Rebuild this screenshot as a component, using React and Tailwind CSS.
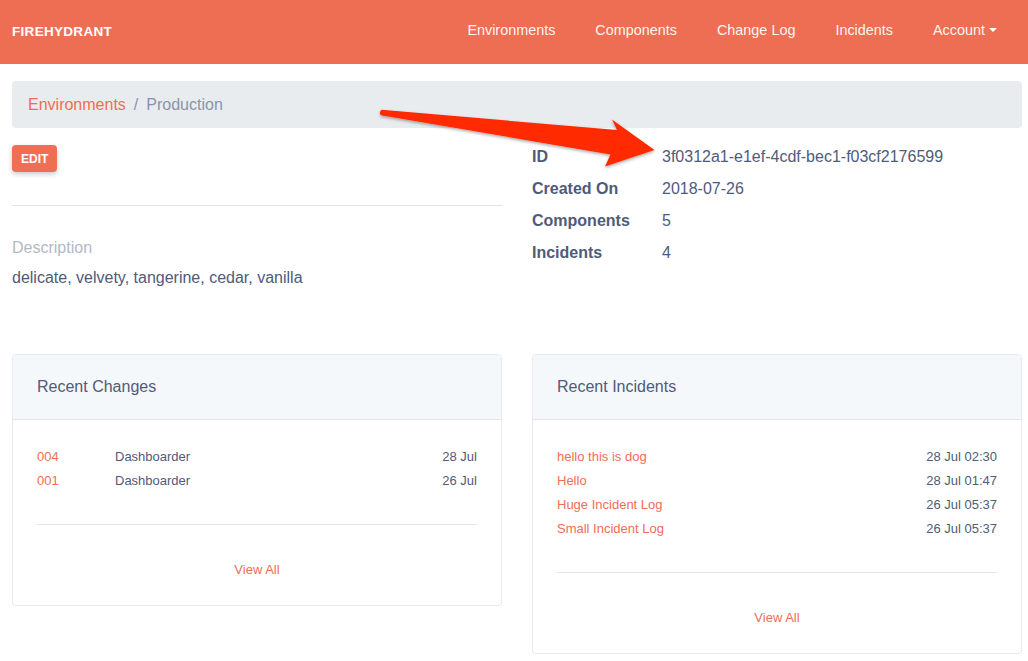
import React from 'react';

const NAV = ['Environments', 'Components', 'Change Log', 'Incidents'];

const CHANGES = [
  { id: '004', name: 'Dashboarder', date: '28 Jul' },
  { id: '001', name: 'Dashboarder', date: '26 Jul' },
];

const INCIDENTS = [
  { name: 'hello this is dog', date: '28 Jul 02:30' },
  { name: 'Hello', date: '28 Jul 01:47' },
  { name: 'Huge Incident Log', date: '26 Jul 05:37' },
  { name: 'Small Incident Log', date: '26 Jul 05:37' },
];

const DETAILS = [
  ['ID', '3f0312a1-e1ef-4cdf-bec1-f03cf2176599'],
  ['Created On', '2018-07-26'],
  ['Components', '5'],
  ['Incidents', '4'],
];

// Card with header, list body, divider and "View All" link
const Card = ({ title, children }) => (
  <div className="border border-[#e7eaef] rounded-[4px] bg-white overflow-hidden">
    <div className="h-[65px] flex items-center px-[24px] bg-[#f5f8fb] border-b border-[#e3e7ec] text-[16px] text-[#4f5b79]">
      {title}
    </div>
    <div className="px-[24px] pt-[25px]">
      {children}
      <div className="mt-[31px] border-t border-[#e2e4e8]" />
      <div className="pt-[33px] pb-[23px] text-center text-[13px] leading-[24px] text-[#ee6e54]">View All</div>
    </div>
  </div>
);

const Arrow = () => (
  <svg className="absolute left-0 top-0 pointer-events-none" width="1028" height="661" viewBox="0 0 1028 661">
    <defs>
      <filter id="sh" x="-10%" y="-50%" width="120%" height="200%">
        <feDropShadow dx="0" dy="1.5" stdDeviation="1.5" floodColor="#000" floodOpacity="0.35" />
      </filter>
    </defs>
    <path
      d="M381.5 109.8 L617 130 L612 119.5 L654.5 150 L605 166.5 L610.5 154.5 L381 115.2 Q378.5 112.5 381.5 109.8 Z"
      fill="#ff2a00"
      filter="url(#sh)"
    />
  </svg>
);

export default function App() {
  return (
    <div className="relative w-[1028px] h-[661px] overflow-hidden bg-white font-['Liberation_Sans',Arial,sans-serif] text-[#4f5b79]">
      {/* Navbar */}
      <div className="h-[64px] bg-[#ee6e54] flex items-center pl-[12px] pr-[31px]">
        <div className="text-white font-bold text-[13.5px] tracking-[0.3px]">FIREHYDRANT</div>
        <div className="ml-auto flex items-center gap-[40px] text-[14.4px] text-white/95 mt-[-2px]">
          {NAV.map((n) => <span key={n}>{n}</span>)}
          <span className="flex items-center gap-[4px]">
            Account
            <span className="w-0 h-0 border-l-[4px] border-r-[4px] border-t-[4px] border-l-transparent border-r-transparent border-t-white mt-[-2px]" />
          </span>
        </div>
      </div>

      <div className="ml-[12px] w-[1010px]">
        {/* Breadcrumb */}
        <div className="mt-[17px] h-[47px] bg-[#e9ecef] rounded-[4px] flex items-center px-[16px] text-[16px]">
          <span className="text-[#ee6e54]">Environments</span>
          <span className="px-[8px] text-[#8a94a8]">/</span>
          <span className="text-[#8a94a8]">Production</span>
        </div>

        {/* Details */}
        <div className="grid grid-cols-2 gap-[30px]">
          <div>
            <button className="mt-[17px] h-[27px] px-[9px] rounded-[4px] bg-[#ef6f55] text-white text-[12px] font-bold shadow-[0_2px_5px_rgba(0,0,0,0.22)]">
              EDIT
            </button>
            <div className="mt-[33px] border-t border-[#e2e4e8]" />
            <div className="mt-[30px] text-[16px] leading-[24px] text-[#b2b9c4]">Description</div>
            <div className="mt-[6px] text-[16px] leading-[24px]">delicate, velvety, tangerine, cedar, vanilla</div>
          </div>
          <div className="mt-[13px]">
            {DETAILS.map(([k, v]) => (
              <div key={k} className="flex h-[32px] items-center text-[16px]">
                <div className="w-[130px] font-bold">{k}</div>
                <div>{v}</div>
              </div>
            ))}
          </div>
        </div>

        {/* Cards */}
        <div className="mt-[64px] grid grid-cols-2 gap-[30px] items-start">
          <Card title="Recent Changes">
            {CHANGES.map((c) => (
              <div key={c.id} className="flex h-[24px] items-center text-[13px]">
                <span className="w-[78px] text-[#ee6e54]">{c.id}</span>
                <span>{c.name}</span>
                <span className="ml-auto">{c.date}</span>
              </div>
            ))}
          </Card>
          <Card title="Recent Incidents">
            {INCIDENTS.map((i) => (
              <div key={i.name} className="flex h-[24px] items-center text-[13px]">
                <span className="text-[#ee6e54]">{i.name}</span>
                <span className="ml-auto">{i.date}</span>
              </div>
            ))}
          </Card>
        </div>
      </div>

      <Arrow />
    </div>
  );
}
